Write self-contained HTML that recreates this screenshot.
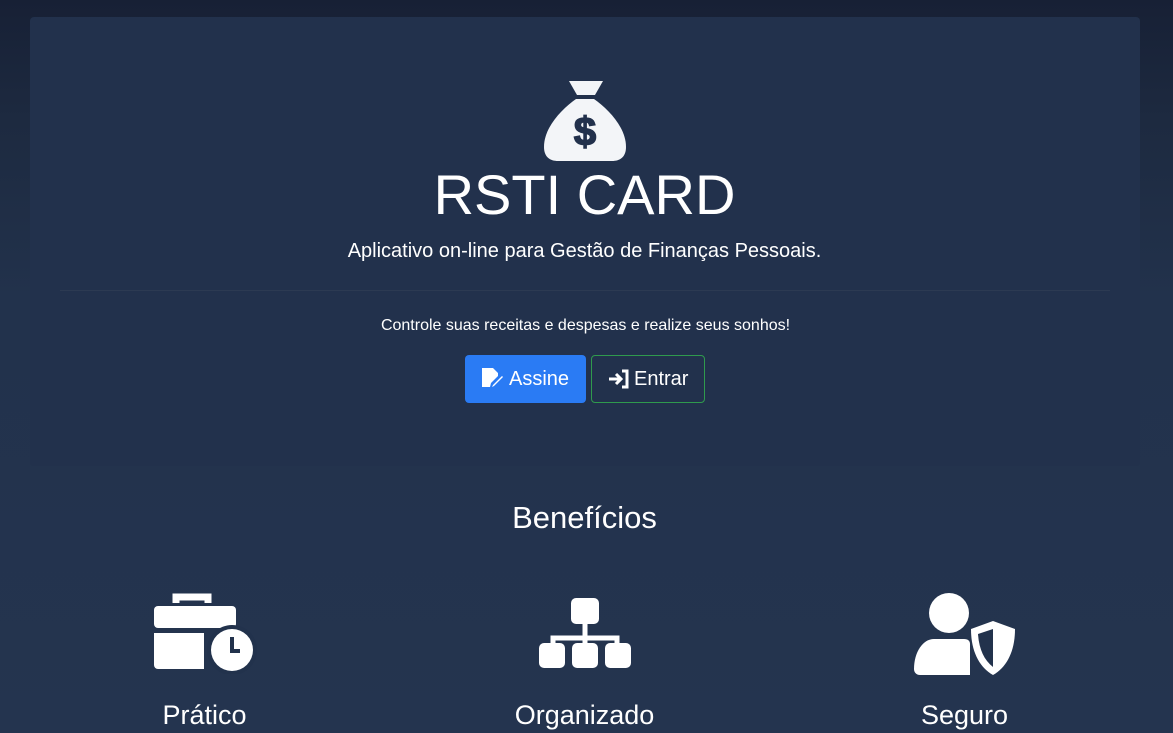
<!DOCTYPE html>
<html><head><meta charset="utf-8"><style>
html,body{margin:0;height:733px;overflow:hidden}
body{background:linear-gradient(#172035 0px,#1d2a40 120px,#22324c 300px,#24344f 733px);font-family:"Liberation Sans",sans-serif;color:#fff;position:relative;width:1173px}
.card{position:absolute;left:30px;top:17px;width:1110px;height:449px;background:#22314c;border-radius:4px}
.c{position:absolute;left:0;width:1173px;text-align:center}
hr{position:absolute;left:60px;top:290px;width:1050px;border:0;border-top:1px solid #2c3a52;margin:0}
.btn{position:absolute;top:355px;height:48px;border-radius:4px;font-size:20px;line-height:48px;box-sizing:border-box}
svg{display:block}
</style></head><body>
<div class="card"></div>
<svg style="position:absolute;left:544px;top:80px" width="82" height="81" viewBox="0 0 82 81">
<path d="M25 1h34l-8 14H33z" fill="#f3f5f8"/>
<path d="M32 19h18c14 10 32 28 32 48c0 10-6 14-14 14H14C6 81 0 77 0 67C0 47 18 29 32 19z" fill="#f3f5f8"/>
<text x="41" y="65" font-family="Liberation Sans" font-weight="bold" font-size="40" text-anchor="middle" fill="#22314c" stroke="#22314c" stroke-width="1.5">$</text>
</svg>
<div class="c" style="top:165px;left:-2px;font-size:56px;line-height:60px">RSTI CARD</div>
<div class="c" style="top:240px;left:-2px;font-size:20px">Aplicativo on-line para Gestão de Finanças Pessoais.</div>
<hr>
<div class="c" style="top:317px;left:-1px;font-size:16px">Controle suas receitas e despesas e realize seus sonhos!</div>
<div class="btn" style="left:465px;width:121px;background:#2a7bf4;padding-left:16px">
<svg style="position:absolute;left:16px;top:13px" width="22" height="20" viewBox="0 0 22 20"><path d="M1 0h11l5 5v3l-7 7-1 4H1z" fill="#fff"/><path d="M12 17l9-9 1 1-9 9-2 1z" fill="#fff"/></svg>
<span style="position:absolute;left:44px">Assine</span></div>
<div class="btn" style="left:591px;width:114px;border:1px solid #2f9a4d">
<svg style="position:absolute;left:16px;top:13px" width="22" height="20" viewBox="0 0 22 20"><path d="M1 10h11M8 5l5 5-5 5M14 2h5v16h-5" stroke="#fff" stroke-width="3" fill="none"/></svg>
<span style="position:absolute;left:42px;top:-1px">Entrar</span></div>
<div class="c" style="top:500px;left:-2px;font-size:31px">Benefícios</div>
<svg style="position:absolute;left:154px;top:593px" width="103" height="81" viewBox="0 0 103 81">
<path d="M22 10V4h32v6" stroke="#fff" stroke-width="7" fill="none"/>
<rect x="0" y="13" width="82" height="22" rx="4" fill="#fff"/>
<path d="M0 40h50v36H4a4 4 0 0 1-4-4z" fill="#fff"/>
<circle cx="78" cy="57" r="25" fill="#22324c"/><circle cx="78" cy="57" r="21" fill="#fff"/>
<path d="M78 44v14h8" stroke="#22324c" stroke-width="4" fill="none"/>
</svg>
<svg style="position:absolute;left:539px;top:598px" width="92" height="70" viewBox="0 0 92 70">
<rect x="32" y="0" width="28" height="26" rx="5" fill="#fff"/>
<path d="M46 26v14M14 48v-8h64v8M46 40v8" stroke="#fff" stroke-width="5" fill="none"/>
<rect x="0" y="45" width="26" height="25" rx="5" fill="#fff"/><rect x="33" y="45" width="26" height="25" rx="5" fill="#fff"/><rect x="66" y="45" width="26" height="25" rx="5" fill="#fff"/>
</svg>
<svg style="position:absolute;left:914px;top:593px" width="103" height="82" viewBox="0 0 103 82">
<circle cx="35" cy="20" r="20" fill="#fff"/>
<path d="M20 46h30c4 0 6 2 6 5v31H6C2 82 0 79 0 76c0-17 9-30 20-30z" fill="#fff"/>
<path d="M79 28l22 8c0 22-8 38-22 46c-14-8-22-24-22-46z" fill="#fff"/>
<path d="M79 36v38c-9-7-14-18-15-33z" fill="#22324c"/>
</svg>
<div class="c" style="left:-382px;top:700px;font-size:27px">Prático</div>
<div class="c" style="left:-2px;top:700px;font-size:27px">Organizado</div>
<div class="c" style="left:378px;top:700px;font-size:27px">Seguro</div>
</body></html>
